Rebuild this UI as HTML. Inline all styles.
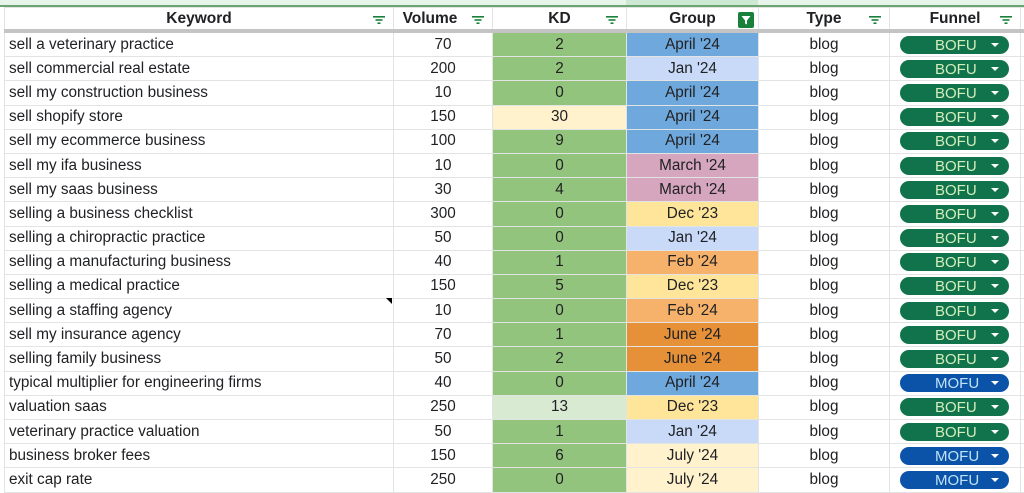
<!DOCTYPE html>
<html><head><style>
body{margin:0;width:1024px;height:492px;overflow:hidden;background:#fff;font-family:"Liberation Sans",Arial,sans-serif;position:relative}
.top{position:absolute;left:0;top:0;width:1024px;height:5px;background:#e6f4ea;border-bottom:2px solid #6aa56f}
.topg{position:absolute;left:626px;top:0;width:132px;height:5px;background:#cde9d3}
table{position:absolute;left:4px;top:7px;width:1036px;border-collapse:collapse;table-layout:fixed;font-size:15.3px;color:#202124}
td{border:1px solid #e2e3e3;padding:0;height:23.2px;white-space:nowrap;overflow:hidden;text-align:center}
tr.h td{height:21px;font-weight:bold;font-size:15.5px;position:relative;border-bottom:4px solid #c4c4c4}
td.k{text-align:left;padding-left:4px}
.f{position:absolute;right:8px;top:8px;width:12px;height:8px}
.g{background:#93c47d}.ly{background:#fff2cc}.lg{background:#d9ead3}
.ap{background:#6fa8dc}.ja{background:#c9daf8}.ma{background:#d5a6bd}.de{background:#ffe599}.fe{background:#f6b26b}.ju{background:#e69138}.jl{background:#fff2cc}
.p{display:block;margin:0 0 0 10px;width:109px;height:18px;border-radius:9px;line-height:19px;font-size:15px;position:relative;text-align:left;padding-left:35px;box-sizing:border-box}
.b{background:#11734b;color:#d4edbc}.m{background:#0a53a8;color:#bfe1f6}
.p:after{content:"";position:absolute;right:10px;top:7px;border-left:4px solid transparent;border-right:4px solid transparent;border-top:4px solid #fff}
.tri{position:absolute;left:386px;top:298px;width:0;height:0;border-top:6px solid #000;border-left:6px solid transparent}
</style></head><body>
<div class="top"></div><div class="topg"></div>
<svg width="0" height="0" style="position:absolute"><defs><g id="fl"><rect x="0" y="0" width="12" height="1.6" fill="#188038"/><rect x="2.5" y="3.2" width="7" height="1.6" fill="#188038"/><rect x="4.5" y="6.4" width="3" height="1.6" fill="#188038"/></g></defs></svg>
<table>
<colgroup><col style="width:389px"><col style="width:99px"><col style="width:134px"><col style="width:132px"><col style="width:131px"><col style="width:131px"><col style="width:20px"></colgroup>
<tr class="h"><td>Keyword<svg class="f"><use href="#fl"/></svg></td><td style="padding-right:26px">Volume<svg class="f"><use href="#fl"/></svg></td><td>KD<svg class="f"><use href="#fl"/></svg></td><td>Group<span style="position:absolute;right:4px;top:4px;width:16px;height:16px;background:#188038;border-radius:2px"><svg width="16" height="16"><path d="M3.5 4h9l-3.5 4.5v4l-2-1v-3z" fill="#fff"/></svg></span></td><td>Type<svg class="f"><use href="#fl"/></svg></td><td>Funnel<svg class="f"><use href="#fl"/></svg></td><td></td></tr>
<tr><td class="k">sell a veterinary practice</td><td>70</td><td class="g">2</td><td class="ap">April '24</td><td>blog</td><td><span class="p b">BOFU</span></td><td></td></tr>
<tr><td class="k">sell commercial real estate</td><td>200</td><td class="g">2</td><td class="ja">Jan '24</td><td>blog</td><td><span class="p b">BOFU</span></td><td></td></tr>
<tr><td class="k">sell my construction business</td><td>10</td><td class="g">0</td><td class="ap">April '24</td><td>blog</td><td><span class="p b">BOFU</span></td><td></td></tr>
<tr><td class="k">sell shopify store</td><td>150</td><td class="ly">30</td><td class="ap">April '24</td><td>blog</td><td><span class="p b">BOFU</span></td><td></td></tr>
<tr><td class="k">sell my ecommerce business</td><td>100</td><td class="g">9</td><td class="ap">April '24</td><td>blog</td><td><span class="p b">BOFU</span></td><td></td></tr>
<tr><td class="k">sell my ifa business</td><td>10</td><td class="g">0</td><td class="ma">March '24</td><td>blog</td><td><span class="p b">BOFU</span></td><td></td></tr>
<tr><td class="k">sell my saas business</td><td>30</td><td class="g">4</td><td class="ma">March '24</td><td>blog</td><td><span class="p b">BOFU</span></td><td></td></tr>
<tr><td class="k">selling a business checklist</td><td>300</td><td class="g">0</td><td class="de">Dec '23</td><td>blog</td><td><span class="p b">BOFU</span></td><td></td></tr>
<tr><td class="k">selling a chiropractic practice</td><td>50</td><td class="g">0</td><td class="ja">Jan '24</td><td>blog</td><td><span class="p b">BOFU</span></td><td></td></tr>
<tr><td class="k">selling a manufacturing business</td><td>40</td><td class="g">1</td><td class="fe">Feb '24</td><td>blog</td><td><span class="p b">BOFU</span></td><td></td></tr>
<tr><td class="k">selling a medical practice</td><td>150</td><td class="g">5</td><td class="de">Dec '23</td><td>blog</td><td><span class="p b">BOFU</span></td><td></td></tr>
<tr><td class="k">selling a staffing agency</td><td>10</td><td class="g">0</td><td class="fe">Feb '24</td><td>blog</td><td><span class="p b">BOFU</span></td><td></td></tr>
<tr><td class="k">sell my insurance agency</td><td>70</td><td class="g">1</td><td class="ju">June '24</td><td>blog</td><td><span class="p b">BOFU</span></td><td></td></tr>
<tr><td class="k">selling family business</td><td>50</td><td class="g">2</td><td class="ju">June '24</td><td>blog</td><td><span class="p b">BOFU</span></td><td></td></tr>
<tr><td class="k">typical multiplier for engineering firms</td><td>40</td><td class="g">0</td><td class="ap">April '24</td><td>blog</td><td><span class="p m">MOFU</span></td><td></td></tr>
<tr><td class="k">valuation saas</td><td>250</td><td class="lg">13</td><td class="de">Dec '23</td><td>blog</td><td><span class="p b">BOFU</span></td><td></td></tr>
<tr><td class="k">veterinary practice valuation</td><td>50</td><td class="g">1</td><td class="ja">Jan '24</td><td>blog</td><td><span class="p b">BOFU</span></td><td></td></tr>
<tr><td class="k">business broker fees</td><td>150</td><td class="g">6</td><td class="jl">July '24</td><td>blog</td><td><span class="p m">MOFU</span></td><td></td></tr>
<tr><td class="k">exit cap rate</td><td>250</td><td class="g">0</td><td class="jl">July '24</td><td>blog</td><td><span class="p m">MOFU</span></td><td></td></tr>
</table>
<div class="tri"></div>
</body></html>
